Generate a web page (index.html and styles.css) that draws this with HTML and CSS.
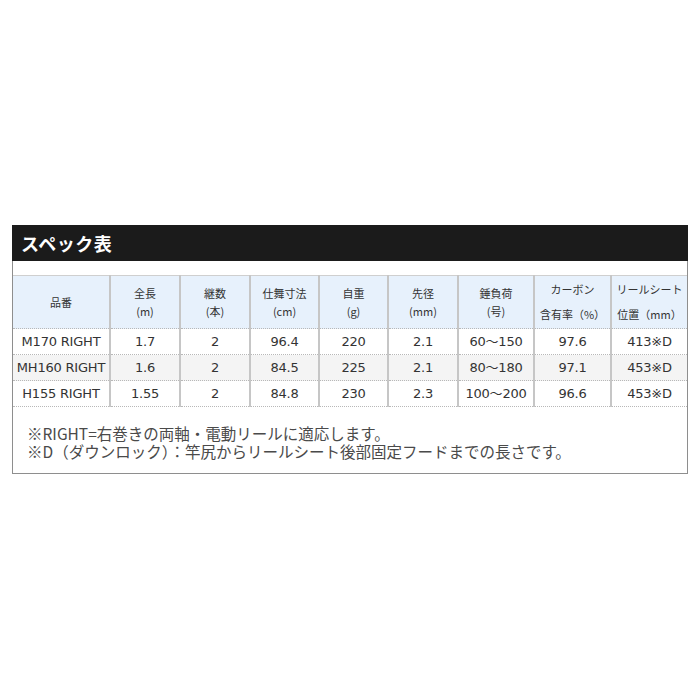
FILE: index.html
```html
<!DOCTYPE html>
<html lang="ja">
<head>
<meta charset="utf-8">
<link rel="stylesheet" href="styles.css">
</head>
<body>
<div class="page">
  <div class="box">
    <div class="title">スペック表</div>
    <div class="body">
      <div class="gap"></div>
      <table class="spec">
        <colgroup>
          <col class="c1"><col class="c2"><col class="c2"><col class="c3"><col class="c3"><col class="c2"><col class="c4"><col class="c5"><col class="c4">
        </colgroup>
        <thead>
          <tr>
            <th>品番</th>
            <th>全長<br>(m)</th>
            <th>継数<br>(本)</th>
            <th>仕舞寸法<br>(cm)</th>
            <th>自重<br>(g)</th>
            <th>先径<br>(mm)</th>
            <th>錘負荷<br>(号)</th>
            <th class="wide">カーボン<br>含有率（%）</th>
            <th class="wide">リールシート<br>位置（mm）</th>
          </tr>
        </thead>
        <tbody>
          <tr>
            <td>M170 RIGHT</td><td>1.7</td><td>2</td><td>96.4</td><td>220</td><td>2.1</td><td>60～150</td><td>97.6</td><td>413※D</td>
          </tr>
          <tr class="alt">
            <td>MH160 RIGHT</td><td>1.6</td><td>2</td><td>84.5</td><td>225</td><td>2.1</td><td>80～180</td><td>97.1</td><td>453※D</td>
          </tr>
          <tr>
            <td>H155 RIGHT</td><td>1.55</td><td>2</td><td>84.8</td><td>230</td><td>2.3</td><td>100～200</td><td>96.6</td><td>453※D</td>
          </tr>
        </tbody>
      </table>
      <div class="notes">
        <p>※RIGHT=右巻きの両軸・電動リールに適応します。</p>
        <p>※D（ダウンロック）：竿尻からリールシート後部固定フードまでの長さです。</p>
      </div>
    </div>
  </div>
</div>
</body>
</html>
```

FILE: styles.css
```css
html, body {
  margin: 0;
  padding: 0;
  background: #ffffff;
}

.page {
  padding-top: 225px;
  padding-left: 12px;
}

.box {
  width: 676px;
}

.title {
  height: 36px;
  line-height: 36px;
  background: #1b1b1b;
  color: #ffffff;
  font-family: "Noto Sans CJK JP", sans-serif;
  font-weight: 700;
  font-size: 18px;
  padding-left: 9px;
  letter-spacing: 0.5px;
}

.body {
  border: 1px solid #8e8e8e;
  border-top: none;
}

.gap {
  height: 14px;
}

.spec {
  width: 674px;
  table-layout: fixed;
  border-collapse: collapse;
  border-top: 1px solid #cfcfcf;
}

.c1 { width: 97px; }
.c2 { width: 70px; }
.c3 { width: 69px; }
.c4 { width: 76px; }
.c5 { width: 77px; }

.spec th,
.spec td {
  padding: 0;
  text-align: center;
  border-left: 2px solid #c6c6c6;
  border-bottom: 1px dotted #b8b8b8;
  color: #333333;
}

.spec th:first-child,
.spec td:first-child {
  border-left: none;
}

.spec th {
  height: 52px;
  background: #e7f1fc;
  font-family: "Noto Sans CJK JP", sans-serif;
  font-weight: 400;
  font-size: 11px;
  line-height: 18px;
}

.spec th.wide {
  line-height: 25px;
}

.spec td {
  height: 25px;
  font-family: "DejaVu Sans", "Noto Sans CJK JP", sans-serif;
  font-size: 13px;
  letter-spacing: -0.2px;
  line-height: 25px;
  white-space: nowrap;
}

.spec tr.alt td {
  background: #f4f4f4;
}

.notes {
  padding: 17px 0 13px 14px;
  font-family: "Noto Sans CJK JP", sans-serif;
  font-size: 15.5px;
  line-height: 18px;
  color: #4a4a4a;
}

.notes p {
  margin: 0;
}
```
